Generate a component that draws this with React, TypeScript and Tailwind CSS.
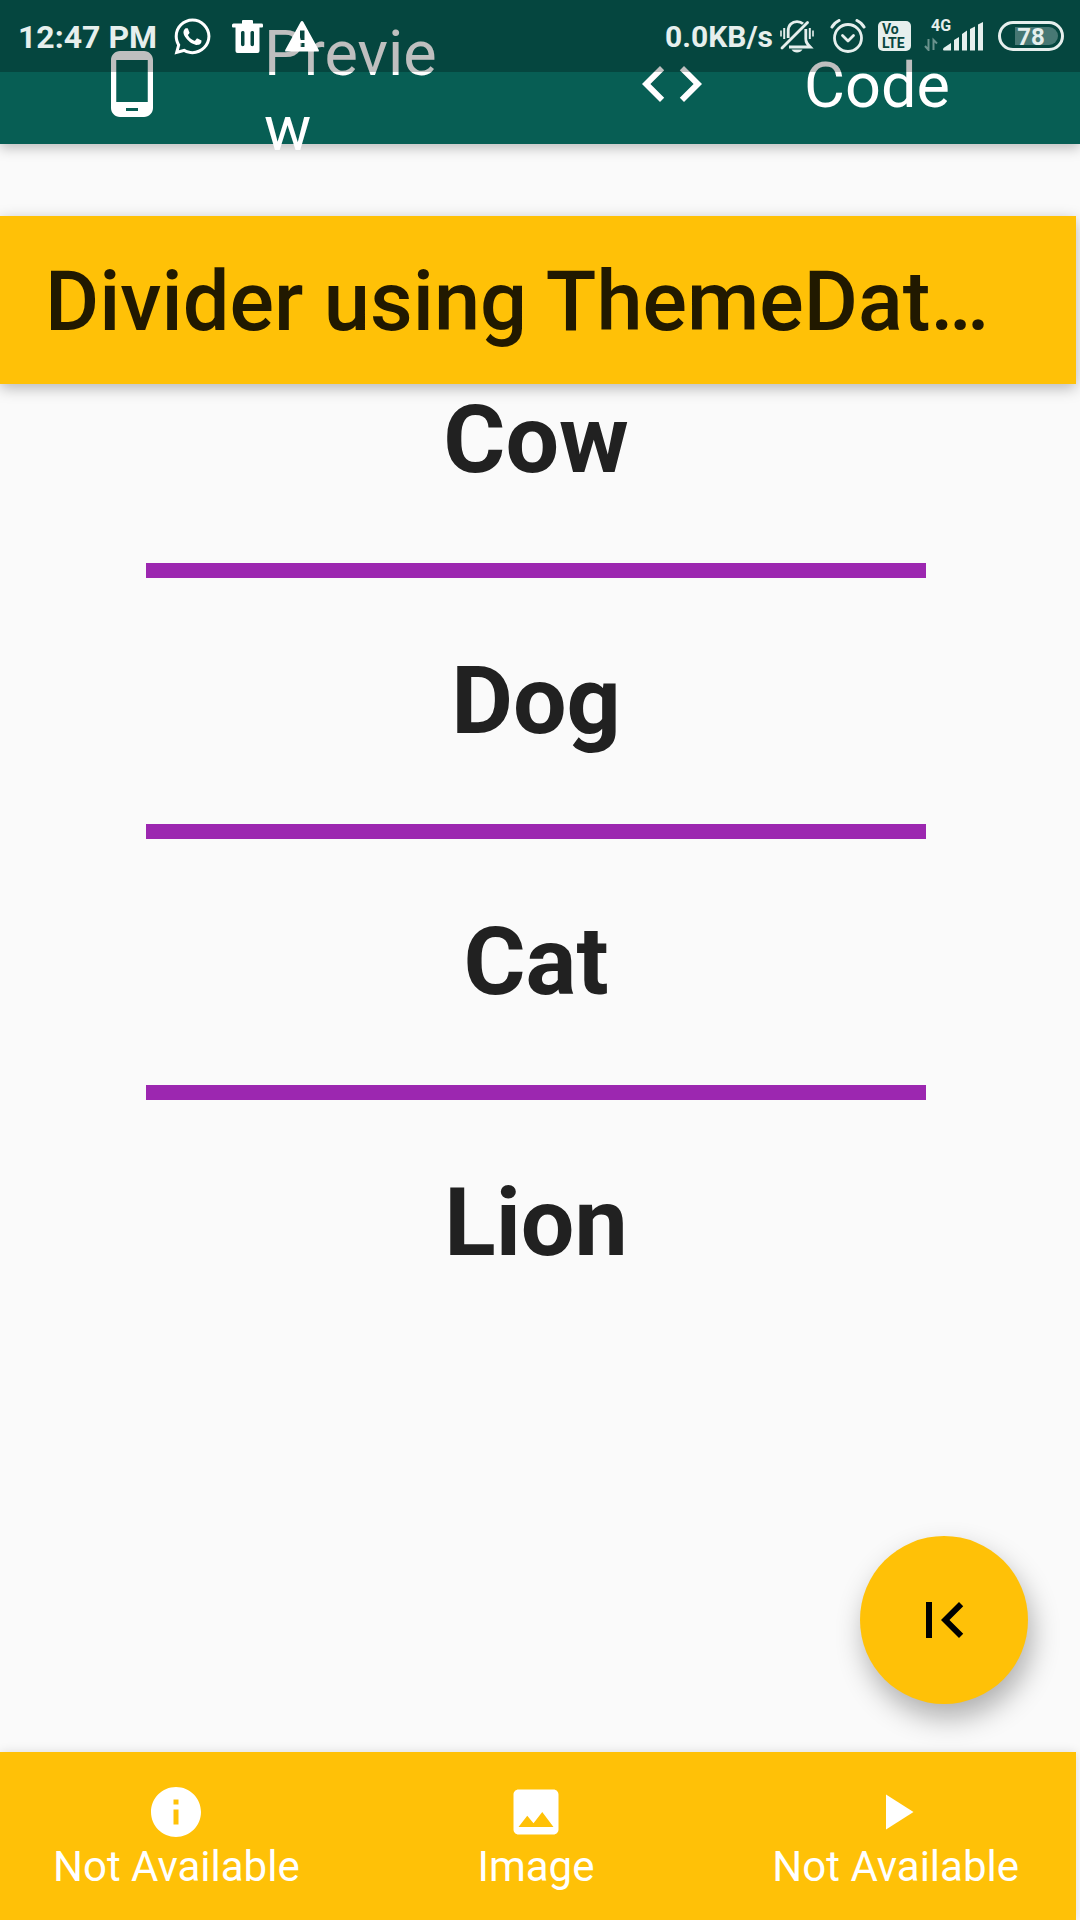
import React from "react";
import { FaWhatsapp } from "react-icons/fa";
import { MdCode, MdFirstPage, MdImage, MdInfo, MdPhoneAndroid, MdPlayArrow } from "react-icons/md";

function TrashIcon() {
  return (
    <svg width="31" height="33" viewBox="0 0 31 33" className="ml-[19px]" aria-hidden="true">
      <path
        fill="#fff"
        fillRule="evenodd"
        d="M11 0h9a1 1 0 0 1 1 1v2.500h8.500a1.500 1.500 0 0 1 1.500 1.500v1.500a1 1 0 0 1-1 1h-2.500V31a2 2 0 0 1-2 2H5.500a2 2 0 0 1-2-2V7.500H1a1 1 0 0 1-1-1V5a1.500 1.500 0 0 1 1.500-1.500H10V1a1 1 0 0 1 1-1zM10.500 11a1.500 1.500 0 0 0-1.500 1.500v12a1.500 1.500 0 0 0 3.500 0v-12A1.500 1.500 0 0 0 10.500 11zM20 11a1.500 1.500 0 0 0-1.500 1.500v12a1.500 1.500 0 0 0 3.500 0v-12A1.500 1.500 0 0 0 20 11z"
      />
    </svg>
  );
}

function WarningIcon() {
  return (
    <svg width="34" height="31" viewBox="0 0 34 31" className="ml-[22px]" aria-hidden="true">
      <path
        fill="#fff"
        fillRule="evenodd"
        d="M17 0c.6 0 1 .3 1.400 1L33.500 28.500c.8 1.400.3 2-1 2h-31c-1.300 0-1.800-.6-1-2L15.600 1c.4-.7.8-1 1.400-1zM15 9.500v9.500h4.500V9.500zM15 22v4h4.500v-4z"
      />
    </svg>
  );
}

function SilentIcon() {
  return (
    <svg width="34" height="33" viewBox="0 0 34 33" className="ml-[7px]" fill="none" stroke="#e6efed" aria-hidden="true">
      <path strokeWidth="1.600" d="M1 10.500v6M33 10.500v6" />
      <path strokeWidth="2" d="M4.200 8v11M29.800 8v11" />
      <path strokeWidth="2.800" d="M8.200 18V11c0-6 4-9.400 8.800-9.400 2.600 0 4.600.8 6 2.200M25.800 9v10c0 3.500 1.500 5 4.500 8H9" />
      <path strokeWidth="2.800" strokeLinecap="round" d="M27.500 2.500L2 28" />
      <path fill="#e6efed" stroke="none" d="M11.500 29.500h11c-1.200 2-3 3-5.500 3s-4.300-1-5.500-3z" />
    </svg>
  );
}

function AlarmIcon() {
  return (
    <svg width="36" height="34" viewBox="0 0 36 34" className="ml-4" fill="none" stroke="#e6efed" aria-hidden="true">
      <circle cx="18" cy="19" r="13.500" strokeWidth="2.800" />
      <path strokeWidth="2.800" strokeLinecap="round" strokeLinejoin="round" d="M12.500 16.500l5.500 5.500 5.500-5.500" />
      <path strokeWidth="3" strokeLinecap="round" d="M2 8c1.500-2.800 4-5 7-6.500M34 8c-1.500-2.800-4-5-7-6.500" />
    </svg>
  );
}

function NetworkSignal() {
  return (
    <div className="relative ml-3 h-[29px] w-[60px]">
      <span className="absolute left-2 -top-1 text-[16px] leading-4 font-bold">4G</span>
      <svg width="60" height="29" viewBox="0 0 60 29" className="block" aria-hidden="true">
        <g stroke="#e6efed" strokeOpacity=".45" fill="none" strokeWidth="2">
          <path d="M5.500 17v11l-3.500-4M10.500 28V18l3.500 3.500" />
        </g>
        <path
          fill="#e6efed"
          d="M21 28.500a1 1 0 0 1-1-1L20.500 26l7.500-5v7.500zM31 18l5-3v13.500h-5zM39 12l5-3.500v20h-5zM47 7l5-2.500v24h-5zM55 2.500L60 0v28.500h-5z"
        />
      </svg>
    </div>
  );
}

function StatusBar() {
  return (
    <div className="absolute inset-x-0 top-0 z-20 flex h-[72px] items-center justify-between bg-black/25 pr-4 pl-[18px] text-[#e6efed]">
      <div className="flex items-center">
        <span className="pt-0.5 text-[32px] leading-[38px] font-bold">12:47 PM</span>
        <FaWhatsapp size={41} className="ml-[15px] text-white" />
        <TrashIcon />
        <WarningIcon />
      </div>
      <div className="flex items-center">
        <span className="pt-0.5 text-[30px] leading-[38px] font-bold">0.0KB/s</span>
        <SilentIcon />
        <AlarmIcon />
        <span className="ml-3 flex h-[30px] w-[33px] flex-col justify-center rounded-[5px] bg-[#e6efed] pl-1 text-[14px] leading-[14px] font-bold text-[#07463f]">
          <span>Vo</span>
          <span>LTE</span>
        </span>
        <NetworkSignal />
        <span className="relative ml-[15px] flex h-[30px] w-[66px] items-center justify-center rounded-full border-[3px] border-[#e6efed] text-[24px] leading-6 font-bold">
          <span className="absolute inset-y-[3px] right-[3px] left-[14px] rounded-l-sm rounded-r-full bg-[#e6efed]/30" />
          <span className="relative pt-0.5">78</span>
        </span>
      </div>
    </div>
  );
}

function TabBar() {
  return (
    <nav className="relative z-10 grid h-36 grid-cols-2 bg-[#075e54] text-[63px] leading-[75px] text-white shadow-[0_4px_12px_rgba(0,0,0,0.25)]">
      <button type="button" className="flex items-start px-24 text-left">
        <MdPhoneAndroid size={72} className="mt-12 shrink-0" />
        <span className="mt-4 ml-24 min-w-0 flex-1 break-all">Preview</span>
      </button>
      <button type="button" className="flex items-start px-24 text-left">
        <MdCode size={72} className="mt-12 shrink-0" />
        <span className="mt-12 ml-24">Code</span>
      </button>
    </nav>
  );
}

const animals = ["Cow", "Dog", "Cat", "Lion"];

const actions = [
  { label: "Not Available", Icon: MdInfo },
  { label: "Image", Icon: MdImage },
  { label: "Not Available", Icon: MdPlayArrow },
];

export default function App() {
  return (
    <div className="relative flex min-h-screen flex-col overflow-hidden bg-[#fafafa] font-[Roboto,sans-serif]">
      <StatusBar />
      <TabBar />
      <div className="mt-[72px] mr-1 flex flex-1 flex-col">
        <header className="flex h-[168px] items-center bg-[#ffc107] pt-1 pr-16 pl-[45px] shadow-[0_4px_14px_rgba(0,0,0,0.28)]">
          <h1 className="truncate text-[83px] leading-[100px] font-medium text-black/87">
            Divider using ThemeData Example
          </h1>
        </header>
        <main className="relative flex-1 pr-1">
          <ul>
            {animals.map((name, i) => (
              <li key={name}>
                {i > 0 && <hr className="mx-[146px] my-[67px] h-[15px] border-0 bg-[#9c27b0]" />}
                <p className="text-center text-[95px] leading-[112px] font-bold text-[#212121]">{name}</p>
              </li>
            ))}
          </ul>
          <button
            type="button"
            aria-label="First page"
            className="absolute right-12 bottom-12 flex size-[168px] items-center justify-center rounded-full bg-[#ffc107] text-black shadow-[4px_14px_28px_rgba(0,0,0,0.3)]"
          >
            <MdFirstPage size={72} />
          </button>
        </main>
        <footer className="flex h-[168px] items-center justify-between bg-[#ffc107] pr-[57px] pl-[53px] text-[42px] leading-[49px] text-white shadow-[0_0_10px_rgba(0,0,0,0.12)]">
          {actions.map(({ label, Icon }, i) => (
            <button key={i} type="button" className="flex flex-col items-center">
              <Icon size={60} />
              <span>{label}</span>
            </button>
          ))}
        </footer>
      </div>
    </div>
  );
}
